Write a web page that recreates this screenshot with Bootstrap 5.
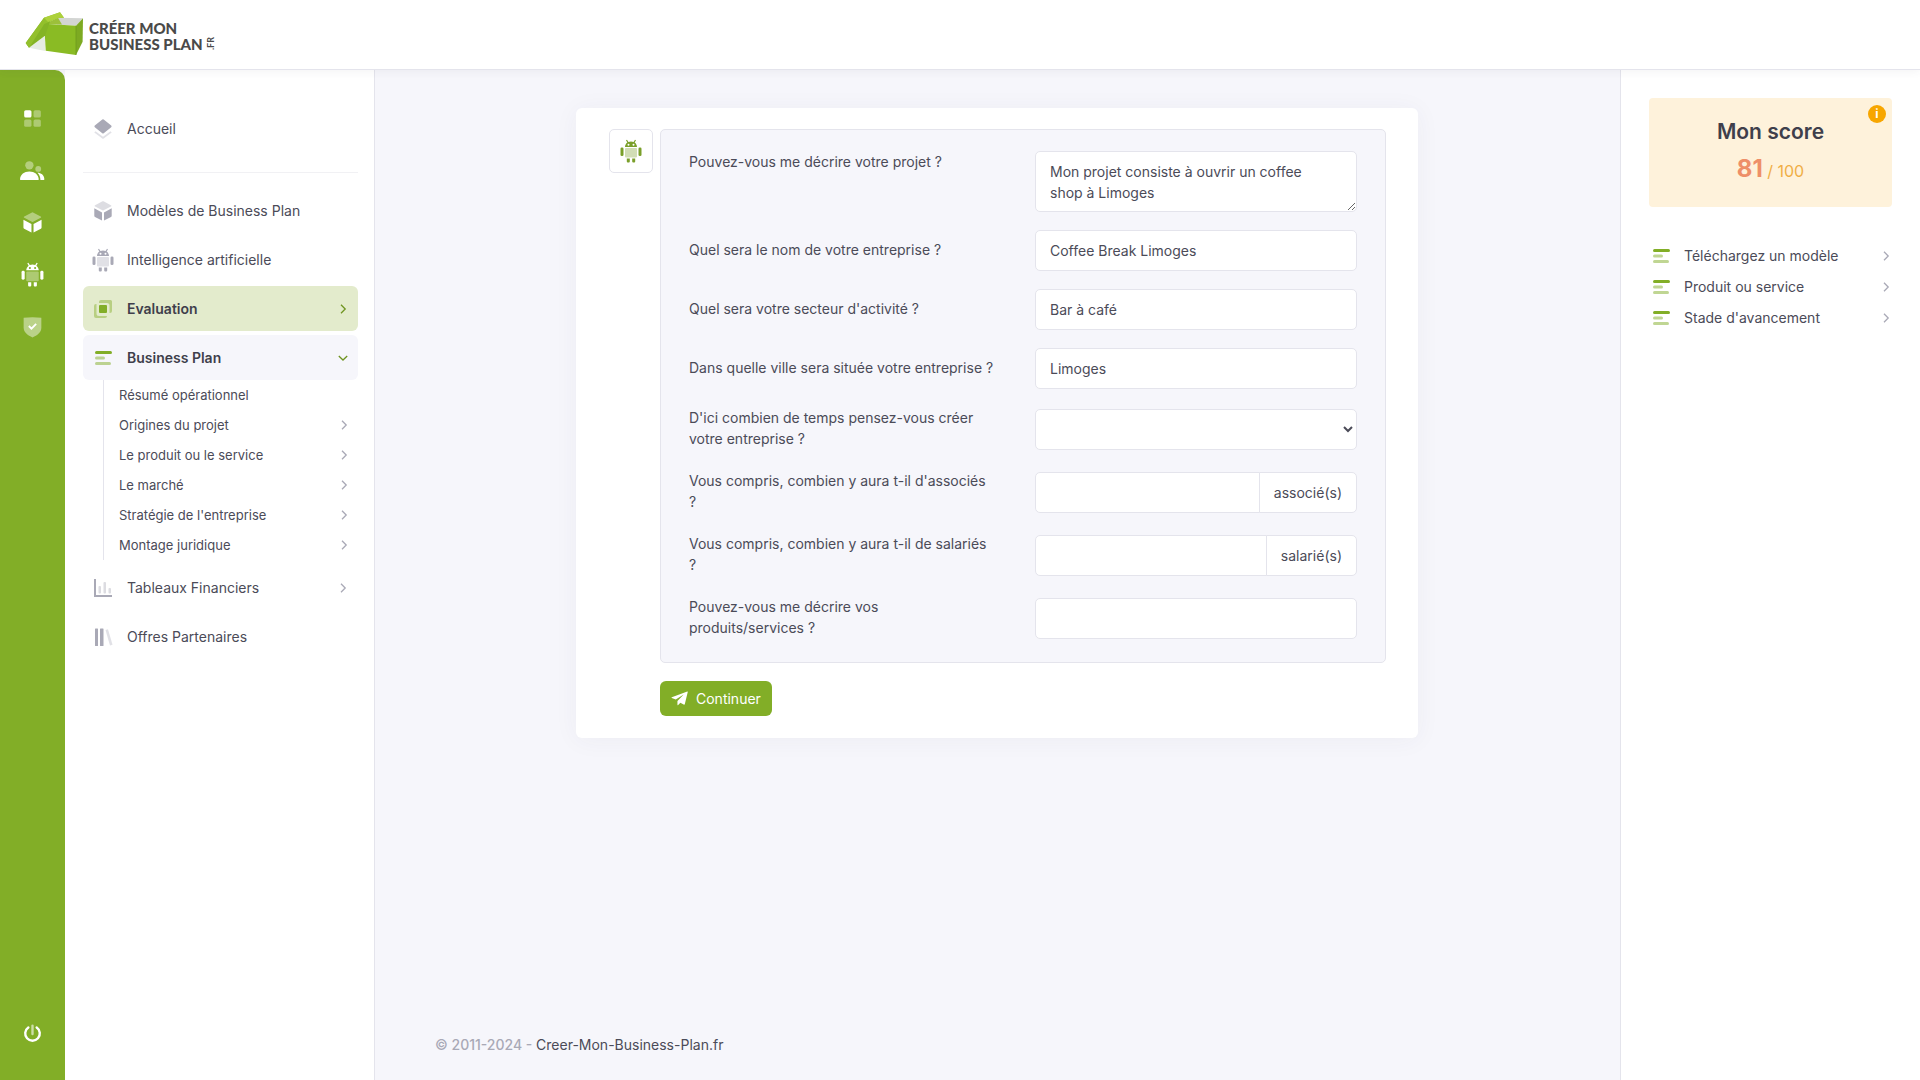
<!DOCTYPE html>
<html lang="fr">
<head>
<meta charset="utf-8">
<meta name="viewport" content="width=device-width, initial-scale=1">
<title>Créer mon business plan</title>
<link href="https://cdn.jsdelivr.net/npm/bootstrap@5.3.0/dist/css/bootstrap.min.css" rel="stylesheet">
<style>
:root { --green: #82ae27; --ink: #4b4b58; --line: #e4e4ec; --soft: #f6f6fb; }
body { font-family: Inter, "Open Sans", sans-serif; font-size: 14px; line-height: 21px; color: var(--ink); background: var(--soft); }
a { color: inherit; text-decoration: none; }
.topbar { height: 70px; padding: 12px 25px; background: #fff; border-bottom: 1px solid var(--line); box-shadow: 0 2px 8px rgba(60,60,90,.06); z-index: 2; }
.brand-name { font-family: Lato, sans-serif; font-weight: 900; font-size: 15px; line-height: 16px; padding-top: 8px; color: #4a4a49; }
.brand-tld { font-family: Lato, sans-serif; font-weight: 700; font-size: 9px; line-height: 9px; writing-mode: vertical-rl; rotate: 180deg; margin: 25px 0 0 3px; color: #4a4a49; }
.rail { width: 65px; flex: none; background: var(--green); border-top-right-radius: 10px; padding: 36px 1px 34px 0; color: #fff; }
.rail svg { width: 25px; height: 25px; display: block; }
.rail-top { row-gap: 27px; }
.side { width: 310px; flex: none; background: #fff; border-right: 1px solid var(--line); padding: 36px 16px 24px 18px; }
.side hr { margin: 21px 0 15px; border-color: #c9c9d4; }
.menu-link { height: 45px; margin-bottom: 4px; padding: 0 10px 0 8px; border-radius: 6px; }
.menu-link .glyph { margin-right: 12px; }
.glyph { width: 24px; height: 24px; flex: none; color: #a9a9b6; }
.glyph.on, .on .glyph { color: var(--green); }
.menu-link.on { font-weight: 600; color: #3f3f4b; }
.menu-link.current { background: #e3ebcc; }
.menu-link.opened { background: var(--soft); margin-bottom: 0; }
.chev { width: 10px; height: 10px; flex: none; color: #a9a9b6; }
.on .chev { color: #6f9420; }
.submenu { margin: 0 0 5px 20px; border-left: 1px solid var(--line); font-size: 13px; }
.submenu a { height: 30px; padding: 0 9px 0 15px; }
.stage { padding: 38px 61px 25px 60px; }
.sheet { width: 100%; max-width: 842px; background: #fff; border-radius: 6px; padding: 21px 32px 22px 33px; box-shadow: 0 2px 24px rgba(60,60,100,.05); }
.avatar { width: 44px; height: 44px; flex: none; border: 1px solid var(--line); border-radius: 5px; margin-right: 7px; color: #7a9f2a; }
.questions { border: 1px solid var(--line); border-radius: 5px; background: var(--soft); padding: 21px 28px; margin-bottom: 18px; }
.questions .row + .row { margin-top: 18px; }
.questions label { margin-bottom: 3px; display: block; }
.form-control, .input-group-text { font-size: 14px; line-height: 21px; color: var(--ink); border-color: var(--line); border-radius: 5px; padding: 9px 14px; background: #fff; }
input.form-control, select.form-control { height: 41px; }
select.form-control { appearance: auto; padding: 9px 2px; }
textarea.form-control { min-height: 61px; height: 61px; resize: vertical; overflow: hidden; }
.btn-go { background: var(--green); color: #fff; font-size: 14px; line-height: 21px; height: 35px; border-radius: 6px; padding: 0 11px; border: 0; }
.btn-go:hover { background: #739c1f; color: #fff; }
.copyright { margin: auto 0 0; color: #a9a9b6; font-weight: 500; }
.copyright a { color: var(--ink); font-weight: 400; }
.score-side { width: 300px; flex: none; background: #fff; border-left: 1px solid var(--line); padding: 28px; }
.score-box { height: 109px; background: #fef2db; border-radius: 4px; padding: 20px 0; margin-bottom: 33px; }
.score-box h1 { font-size: 21px; line-height: 27px; font-weight: 600; color: #3f3f4b; margin: 0 0 8px; }
.score-box p { font-size: 16px; line-height: 32px; color: #f0ae45; margin: 0; }
.score-box strong { font-size: 24px; font-weight: 700; color: #ee8f68; }
.info-btn { top: 7px; right: 6px; width: 18px; height: 18px; border-radius: 50%; background: #f7a600; color: #fff; font-size: 12px; line-height: 18px; font-weight: 700; }
.steps a { height: 31px; padding-right: 1px; }
.steps .glyph { margin-right: 11px; }
</style>
</head>
<body class="min-vh-100 d-flex flex-column">
<svg class="d-none">
  <symbol id="i-grid" viewBox="0 0 24 24" fill="currentColor"><rect x="4" y="4" width="7" height="7" rx="1.5"/><g opacity=".35"><rect x="13" y="4" width="7" height="7" rx="1.5"/><rect x="4" y="13" width="7" height="7" rx="1.5"/><rect x="13" y="13" width="7" height="7" rx="1.5"/></g></symbol>
  <symbol id="i-users" viewBox="0 0 24 24" fill="currentColor"><g opacity=".4"><circle cx="9" cy="7" r="4"/><circle cx="17.5" cy="10.5" r="2.800"/></g><path d="M0 20.500C.4 15.800 4 13 9 13s8.600 2.800 9 7.500q0 .5-.5.5H.5q-.5 0-.5-.5zM16.800 14.200c3.400.1 6.200 1.900 6.600 6.100q0 .7-.6.7h-3.200c0-2.600-1-5-2.800-6.800z"/></symbol>
  <symbol id="i-cube" viewBox="0 0 24 24" fill="currentColor"><path opacity=".4" d="M12.500 2.300l7.400 3.900c.6.400.6.900 0 1.200l-7.300 3.900q-.6.300-1.200 0L4.100 7.400c-.6-.3-.6-.8 0-1.200l7.400-3.900q.5-.3 1 0z"/><path d="M3.300 9.300l7.700 4.100v8.200L4 17.900q-.7-.4-.7-1.200zM20.700 9.300L13 13.400v8.200l7-3.700q.7-.4.7-1.200z"/></symbol>
  <symbol id="i-droid" viewBox="0 0 24 24" fill="currentColor"><rect opacity=".35" x="6" y="9" width="12" height="9.500" rx="1"/><rect x="1.500" y="8.500" width="3" height="8.500" rx="1.300"/><rect x="19.500" y="8.500" width="3" height="8.500" rx="1.300"/><path d="M7.800 19.500h3v3q0 1-1 1h-1q-1 0-1-1zM13.200 19.500h3v3q0 1-1 1h-1q-1 0-1-1z"/><path fill-rule="evenodd" d="M6 8c.1-2 .9-3.500 2.300-4.500L7 1.300l1-.6 1.400 2.200q2.600-.9 5.200 0L16 .7l1 .6-1.300 2.200C17.100 4.500 17.900 6 18 8zM9.500 4.700a1 1 0 100 2 1 1 0 000-2zm5 0a1 1 0 100 2 1 1 0 000-2z"/></symbol>
  <symbol id="i-shield" viewBox="0 0 24 24"><path opacity=".45" fill="currentColor" d="M3.500 3.500q8.500-1 17 0V13c0 5-4 7.500-8.500 9.500C7.500 20.500 3.500 18 3.500 13z"/><path d="M8.500 11.500l2.500 2.500 4.500-4.500" fill="none" stroke="currentColor" stroke-width="1.800"/></symbol>
  <symbol id="i-power" viewBox="0 0 24 24" fill="none" stroke="currentColor" stroke-width="2.300" stroke-linecap="round"><path d="M8 6.200a7 7 0 1 0 8 0"/><path d="M12 4.500v8" opacity=".6"/></symbol>
  <symbol id="i-layers" viewBox="0 0 24 24" fill="currentColor"><path d="M12.700 2.600l7.500 6q.9.800 0 1.600l-7.500 6q-.7.500-1.400 0l-7.500-6q-.9-.8 0-1.600l7.500-6q.7-.5 1.400 0z"/><path opacity=".35" d="M4.500 14.200l6.800 5q.7.500 1.400 0l6.800-5 1.200 1.200-8 6q-.7.500-1.400 0l-8-6z"/></symbol>
  <symbol id="i-copies" viewBox="0 0 24 24" fill="currentColor"><path opacity=".45" d="M10 3h9.500Q21 3 21 4.500V14q0 2-2 2h-.500V8.500Q18.500 6 16 6H8V5q0-2 2-2z"/><path opacity=".45" d="M3 9q0-2 2-2h.500v9.500Q5.500 19 8 19h8q0 2-2 2H5q-2 0-2-2z"/><rect x="8" y="8" width="8" height="8" rx="1"/></symbol>
  <symbol id="i-lines" viewBox="0 0 24 24" fill="currentColor"><rect x="4" y="5" width="17" height="3" rx="1.500"/><rect opacity=".5" x="4" y="10.500" width="10" height="3" rx="1.500"/><rect opacity=".5" x="4" y="16" width="16" height="3" rx="1.500"/></symbol>
  <symbol id="i-chart" viewBox="0 0 24 24" fill="currentColor"><path d="M3 3h2v16h16v2H3z"/><g opacity=".4"><rect x="7.500" y="10" width="2.500" height="7.500" rx="1"/><rect x="12.500" y="6" width="2.500" height="11.500" rx="1"/><rect x="17.500" y="12" width="2.500" height="5.500" rx="1"/></g></symbol>
  <symbol id="i-books" viewBox="0 0 24 24" fill="currentColor"><rect x="4" y="3.500" width="3" height="17.500" rx=".5"/><rect x="9" y="3.500" width="3.500" height="17.500" rx=".5"/><path opacity=".35" d="M14.500 5l2.500-.7 4.500 15.500-2.500.8z"/></symbol>
  <symbol id="i-right" viewBox="0 0 10 10"><path d="M3 .8L7.200 5 3 9.200" fill="none" stroke="currentColor" stroke-width="1.300"/></symbol>
  <symbol id="i-down" viewBox="0 0 10 10"><path d="M.8 3L5 7l4.200-4" fill="none" stroke="currentColor" stroke-width="1.300"/></symbol>
  <symbol id="i-send" viewBox="0 0 18 16" fill="currentColor"><path d="M17.300.5L.8 6.600q-.8.400 0 .8l4.200 1.700 8.500-5.400-6.700 6.900v3.900q.1 1 .8.300l2.300-2.300 3.500 1.900q1 .5 1.300-.6L17.800 1q.1-.7-.5-.5z"/></symbol>
</svg>

<header class="topbar position-relative d-flex align-items-start">
  <a href="#" class="d-flex" aria-label="Créer mon business plan">
    <svg width="60" height="44" viewBox="0 0 60 44" class="flex-shrink-0 me-1">
      <path d="M4 35.700L20 24v15z" fill="#e6ece4"/>
      <path d="M33 5.700L58 6.300 51 13.700 32 12.500z" fill="#d3d5d3"/>
      <path d="M33 5.700l4 6.800-17.700-.5z" fill="#9cc03a"/>
      <path d="M19.300 11.800L51 13.700V43l-30.300-4.300z" fill="#8abb24"/>
      <path d="M51 13.700l7-7.400-.4 23.400L51 43z" fill="#7daa22"/>
      <path d="M.7 31L19 5.700l7 1-6 17L4 35.700z" fill="#84b425"/>
      <path d="M19 5.700L35 .3l4 5.400-6 .3-13.700 6L4 35.700.7 31z" fill="#93c02c"/>
      <path d="M19 5.700L35 .3l4 5.400-6 .3-10 4z" fill="#add13b"/>
      <path d="M51 13.700V43" stroke="#6d991c" stroke-width=".8"/>
    </svg>
    <span class="brand-name text-nowrap">CRÉER MON<br>BUSINESS PLAN</span>
    <span class="brand-tld align-self-start">.FR</span>
  </a>
</header>

<div class="d-flex flex-grow-1">
  <nav class="rail d-flex flex-column align-items-center justify-content-between" aria-label="Raccourcis">
    <div class="rail-top d-grid">
      <a href="#" aria-label="Tableau de bord"><svg><use href="#i-grid"/></svg></a>
      <a href="#" aria-label="Contacts"><svg><use href="#i-users"/></svg></a>
      <a href="#" aria-label="Modèles"><svg><use href="#i-cube"/></svg></a>
      <a href="#" aria-label="Assistant"><svg><use href="#i-droid"/></svg></a>
      <a href="#" aria-label="Sécurité"><svg><use href="#i-shield"/></svg></a>
    </div>
    <a href="#" aria-label="Déconnexion"><svg><use href="#i-power"/></svg></a>
  </nav>

  <nav class="side" aria-label="Menu principal">
    <a href="#" class="menu-link d-flex align-items-center"><svg class="glyph"><use href="#i-layers"/></svg>Accueil</a>
    <hr>
    <a href="#" class="menu-link d-flex align-items-center"><svg class="glyph"><use href="#i-cube"/></svg>Modèles de Business Plan</a>
    <a href="#" class="menu-link d-flex align-items-center"><svg class="glyph"><use href="#i-droid"/></svg>Intelligence artificielle</a>
    <a href="#" class="menu-link on current d-flex align-items-center"><svg class="glyph"><use href="#i-copies"/></svg>Evaluation<svg class="chev ms-auto"><use href="#i-right"/></svg></a>
    <a href="#" class="menu-link on opened d-flex align-items-center"><svg class="glyph"><use href="#i-lines"/></svg>Business Plan<svg class="chev ms-auto"><use href="#i-down"/></svg></a>
    <div class="submenu">
      <a href="#" class="d-flex align-items-center">Résumé opérationnel</a>
      <a href="#" class="d-flex align-items-center">Origines du projet<svg class="chev ms-auto"><use href="#i-right"/></svg></a>
      <a href="#" class="d-flex align-items-center">Le produit ou le service<svg class="chev ms-auto"><use href="#i-right"/></svg></a>
      <a href="#" class="d-flex align-items-center">Le marché<svg class="chev ms-auto"><use href="#i-right"/></svg></a>
      <a href="#" class="d-flex align-items-center">Stratégie de l'entreprise<svg class="chev ms-auto"><use href="#i-right"/></svg></a>
      <a href="#" class="d-flex align-items-center">Montage juridique<svg class="chev ms-auto"><use href="#i-right"/></svg></a>
    </div>
    <a href="#" class="menu-link d-flex align-items-center"><svg class="glyph"><use href="#i-chart"/></svg>Tableaux Financiers<svg class="chev ms-auto"><use href="#i-right"/></svg></a>
    <a href="#" class="menu-link d-flex align-items-center"><svg class="glyph"><use href="#i-books"/></svg>Offres Partenaires</a>
  </nav>

  <main class="stage flex-grow-1 d-flex flex-column">
    <form class="sheet d-flex align-items-start mx-auto">
      <span class="avatar d-flex align-items-center justify-content-center"><svg width="24" height="24"><use href="#i-droid"/></svg></span>
      <div class="flex-grow-1">
        <div class="questions">
          <div class="row gx-4">
            <label class="col-6" for="q1">Pouvez-vous me décrire votre projet ?</label>
            <div class="col-6"><textarea class="form-control" id="q1" rows="2">Mon projet consiste à ouvrir un coffee
shop à Limoges</textarea></div>
          </div>
          <div class="row gx-4 align-items-center">
            <label class="col-6" for="q2">Quel sera le nom de votre entreprise ?</label>
            <div class="col-6"><input class="form-control" id="q2" type="text" value="Coffee Break Limoges"></div>
          </div>
          <div class="row gx-4 align-items-center">
            <label class="col-6" for="q3">Quel sera votre secteur d'activité ?</label>
            <div class="col-6"><input class="form-control" id="q3" type="text" value="Bar à café"></div>
          </div>
          <div class="row gx-4 align-items-center">
            <label class="col-6" for="q4">Dans quelle ville sera située votre entreprise ?</label>
            <div class="col-6"><input class="form-control" id="q4" type="text" value="Limoges"></div>
          </div>
          <div class="row gx-4 align-items-center">
            <label class="col-6" for="q5">D'ici combien de temps pensez-vous créer<br>votre entreprise ?</label>
            <div class="col-6"><select class="form-control" id="q5"><option></option></select></div>
          </div>
          <div class="row gx-4 align-items-center">
            <label class="col-6" for="q6">Vous compris, combien y aura t-il d'associés<br>?</label>
            <div class="col-6"><div class="input-group"><input class="form-control" id="q6" type="text"><span class="input-group-text">associé(s)</span></div></div>
          </div>
          <div class="row gx-4 align-items-center">
            <label class="col-6" for="q7">Vous compris, combien y aura t-il de salariés<br>?</label>
            <div class="col-6"><div class="input-group"><input class="form-control" id="q7" type="text"><span class="input-group-text">salarié(s)</span></div></div>
          </div>
          <div class="row gx-4 align-items-center">
            <label class="col-6" for="q8">Pouvez-vous me décrire vos<br>produits/services ?</label>
            <div class="col-6"><input class="form-control" id="q8" type="text"></div>
          </div>
        </div>
        <button type="button" class="btn btn-go d-inline-flex align-items-center gap-2"><svg width="17" height="15"><use href="#i-send"/></svg>Continuer</button>
      </div>
    </form>
    <footer class="copyright">© 2011-2024 - <a href="#">Creer-Mon-Business-Plan.fr</a></footer>
  </main>

  <aside class="score-side">
    <section class="score-box position-relative text-center">
      <h1>Mon score</h1>
      <p><strong>81</strong> / 100</p>
      <button type="button" class="info-btn position-absolute border-0 p-0" aria-label="Informations">i</button>
    </section>
    <div class="steps">
      <a href="#" class="d-flex align-items-center"><svg class="glyph on"><use href="#i-lines"/></svg>Téléchargez un modèle<svg class="chev ms-auto"><use href="#i-right"/></svg></a>
      <a href="#" class="d-flex align-items-center"><svg class="glyph on"><use href="#i-lines"/></svg>Produit ou service<svg class="chev ms-auto"><use href="#i-right"/></svg></a>
      <a href="#" class="d-flex align-items-center"><svg class="glyph on"><use href="#i-lines"/></svg>Stade d'avancement<svg class="chev ms-auto"><use href="#i-right"/></svg></a>
    </div>
  </aside>
</div>
<script src="https://cdn.jsdelivr.net/npm/bootstrap@5.3.0/dist/js/bootstrap.bundle.min.js"></script>
</body>
</html>
